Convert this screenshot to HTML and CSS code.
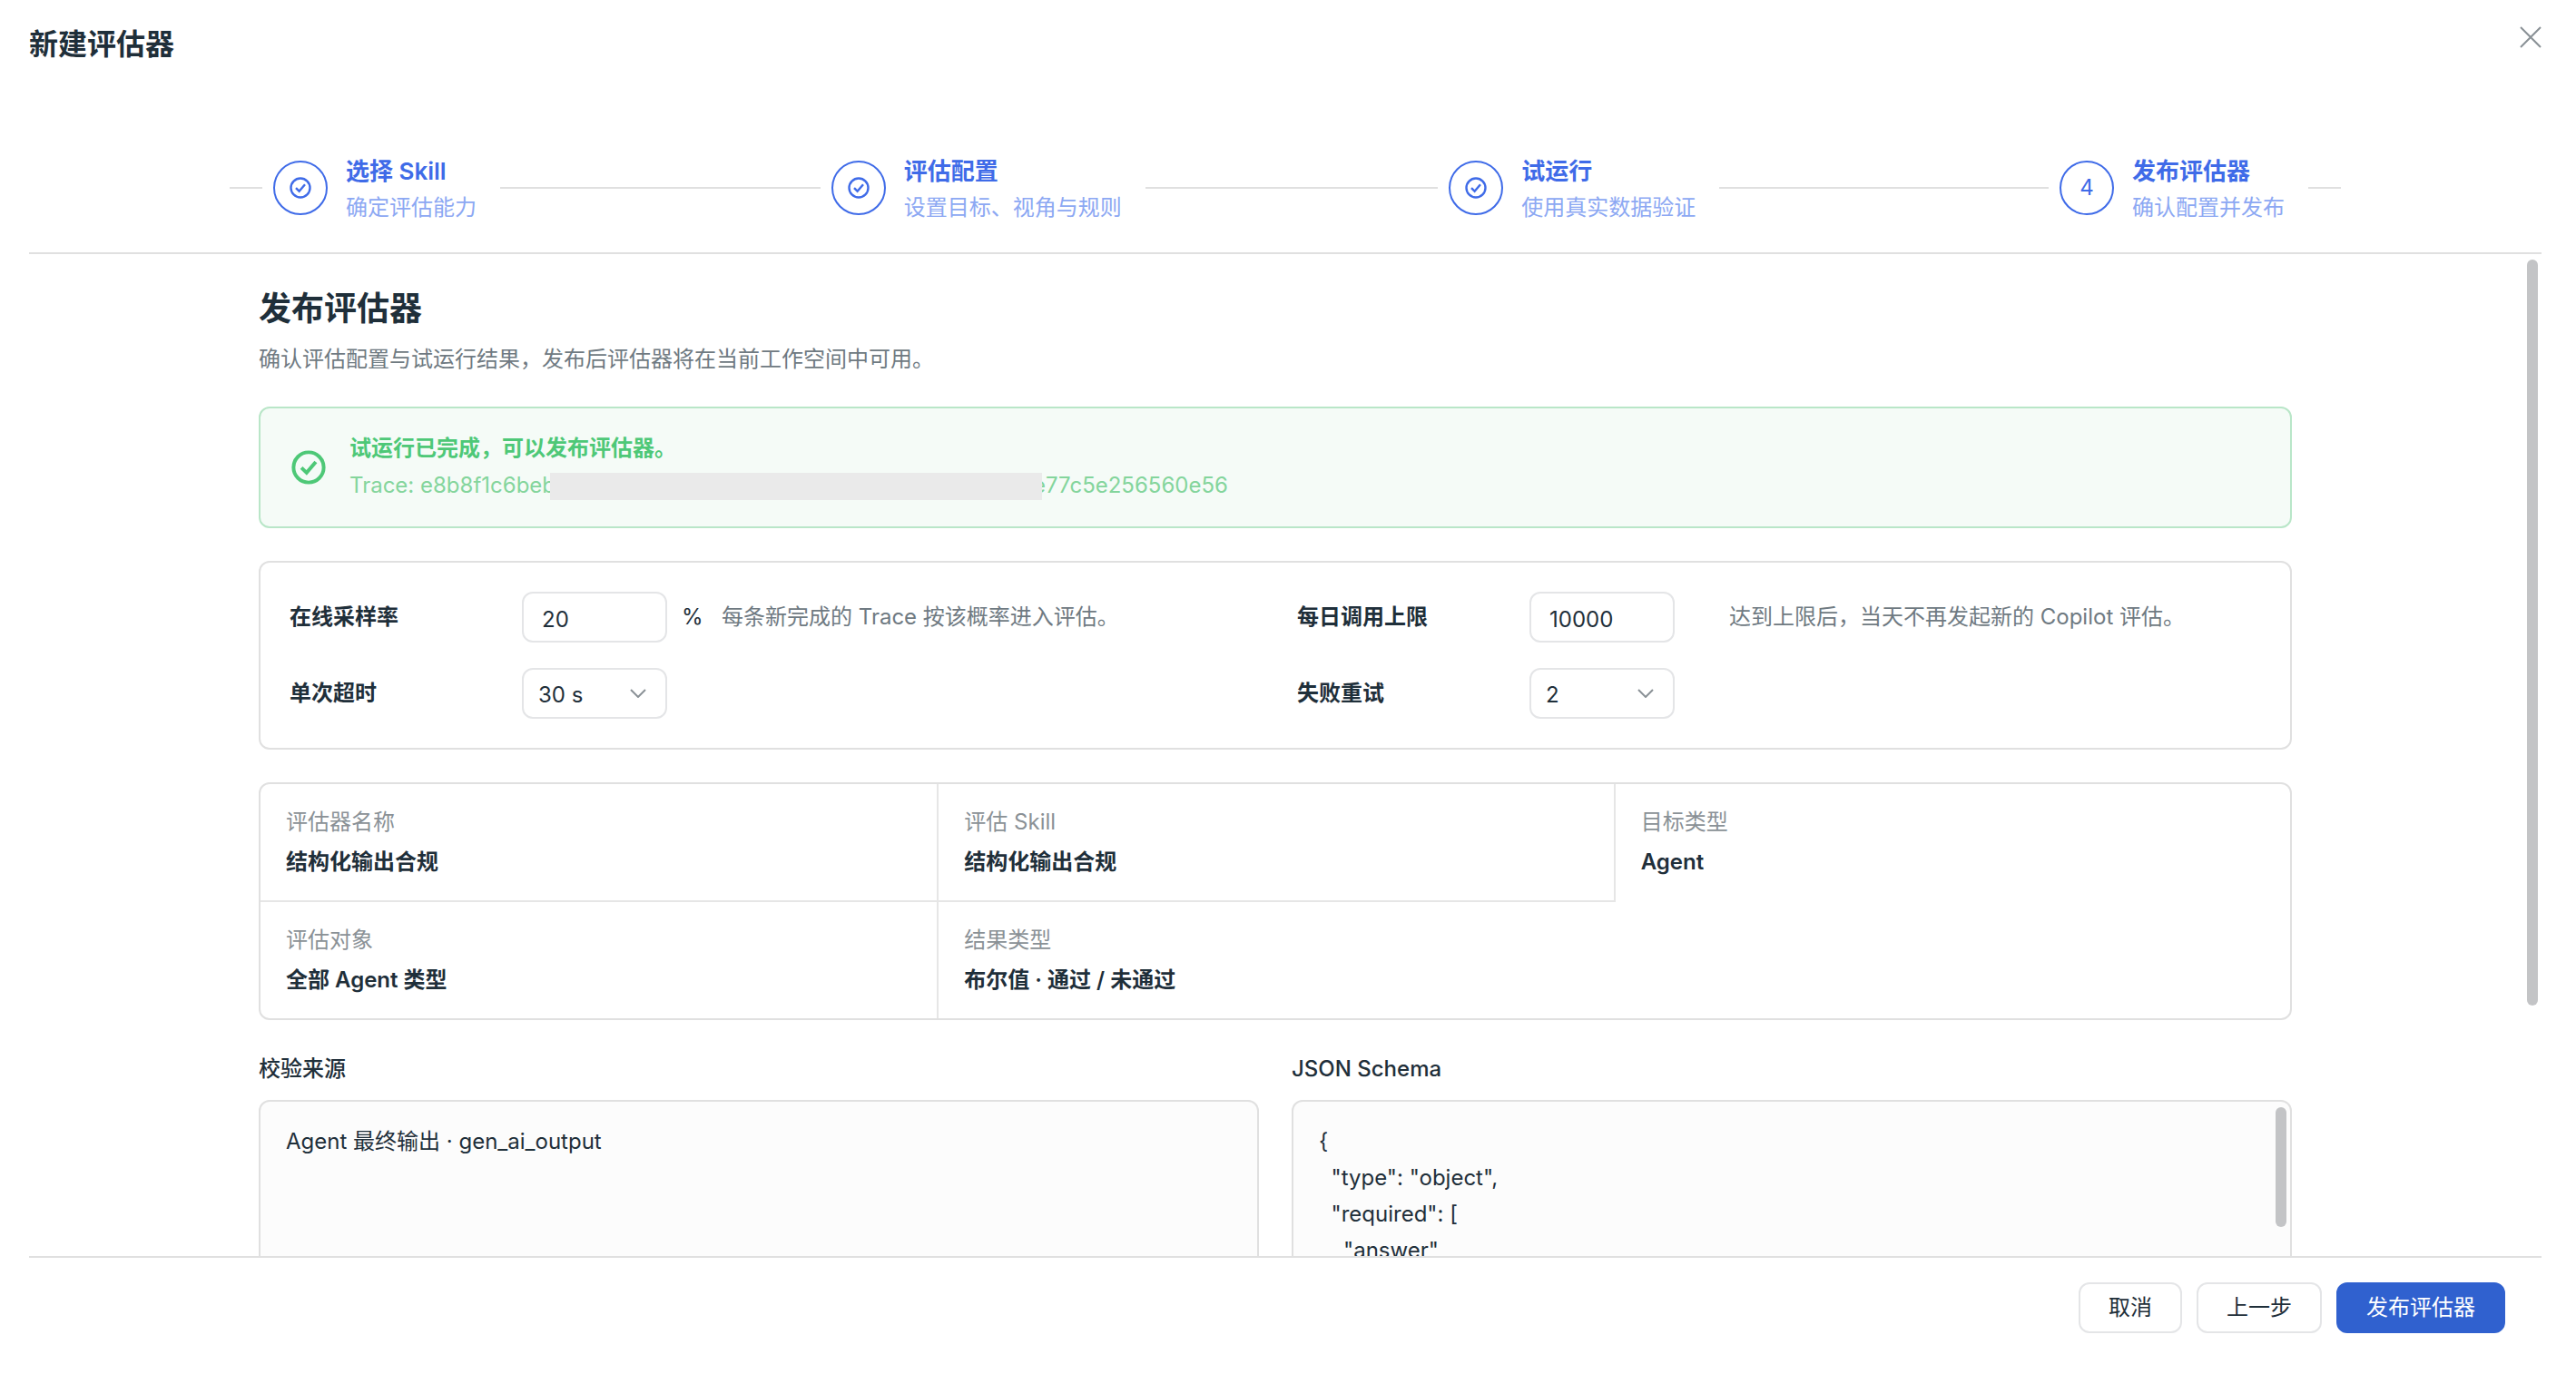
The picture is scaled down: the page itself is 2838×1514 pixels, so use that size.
FILE: index.html
```html
<!doctype html>
<html lang="zh-CN">

<head>
	<meta charset="utf-8">
	<title>新建评估器</title>
	<link rel="stylesheet" href="styles.css">
</head>

<body>
	<svg class="defs" aria-hidden="true">
		<symbol id="check-circle" viewBox="0 0 24 24">
			<circle cx="12" cy="12" r="10.5" />
			<path d="M7 12.2l3.6 3.5L17 8.2" />
		</symbol>
	</svg>

	<header class="header">
		<h1>新建评估器</h1>
		<button class="close" type="button" aria-label="关闭">
			<svg viewBox="0 0 24 24"><path d="M1 1l22 22M23 1L1 23" /></svg>
		</button>
	</header>

	<!-- 步骤条 -->
	<ol class="steps">
		<li class="step first">
			<span class="circle"><svg><use href="#check-circle" /></svg></span>
			<div class="step-text">
				<strong>选择 Skill</strong>
				<span>确定评估能力</span>
			</div>
		</li>
		<li class="step second">
			<span class="circle"><svg><use href="#check-circle" /></svg></span>
			<div class="step-text">
				<strong>评估配置</strong>
				<span>设置目标、视角与规则</span>
			</div>
		</li>
		<li class="step third">
			<span class="circle"><svg><use href="#check-circle" /></svg></span>
			<div class="step-text">
				<strong>试运行</strong>
				<span>使用真实数据验证</span>
			</div>
		</li>
		<li class="step last">
			<span class="circle">4</span>
			<div class="step-text">
				<strong>发布评估器</strong>
				<span>确认配置并发布</span>
			</div>
		</li>
	</ol>

	<main class="main">
		<div class="content">
			<h2>发布评估器</h2>
			<p class="lead">确认评估配置与试运行结果，发布后评估器将在当前工作空间中可用。</p>

			<div class="alert">
				<svg><use href="#check-circle" /></svg>
				<div>
					<strong>试运行已完成，可以发布评估器。</strong>
					<p>Trace: e8b8f1c6beb<span class="mask"></span>e77c5e256560e56</p>
				</div>
			</div>

			<form class="settings">
				<div class="field">
					<label for="rate">在线采样率</label>
					<input id="rate" type="text" value="20">
					<span class="unit">%</span>
					<span class="hint">每条新完成的 Trace 按该概率进入评估。</span>
				</div>
				<div class="field">
					<label for="limit">每日调用上限</label>
					<input id="limit" type="text" value="10000">
					<span class="unit"></span>
					<span class="hint">达到上限后，当天不再发起新的 Copilot 评估。</span>
				</div>
				<div class="field">
					<label for="timeout">单次超时</label>
					<div class="select">
						<select id="timeout">
							<option>30 s</option>
						</select>
						<svg viewBox="0 0 18 10"><path d="M1 1l8 8 8-8" /></svg>
					</div>
				</div>
				<div class="field">
					<label for="retry">失败重试</label>
					<div class="select">
						<select id="retry">
							<option>2</option>
						</select>
						<svg viewBox="0 0 18 10"><path d="M1 1l8 8 8-8" /></svg>
					</div>
				</div>
			</form>

			<dl class="summary">
				<div class="cell">
					<dt>评估器名称</dt>
					<dd>结构化输出合规</dd>
				</div>
				<div class="cell">
					<dt>评估 Skill</dt>
					<dd>结构化输出合规</dd>
				</div>
				<div class="cell">
					<dt>目标类型</dt>
					<dd>Agent</dd>
				</div>
				<div class="cell">
					<dt>评估对象</dt>
					<dd>全部 Agent 类型</dd>
				</div>
				<div class="cell">
					<dt>结果类型</dt>
					<dd>布尔值 · 通过 / 未通过</dd>
				</div>
			</dl>

			<div class="sources">
				<section>
					<h3>校验来源</h3>
					<pre class="box">Agent 最终输出 · gen_ai_output</pre>
				</section>
				<section>
					<h3>JSON Schema</h3>
					<div class="box-wrap">
						<pre class="box">{
  "type": "object",
  "required": [
    "answer"
  ]
}</pre>
						<span class="thumb box-thumb"></span>
					</div>
				</section>
			</div>
		</div>
		<span class="thumb main-thumb"></span>
	</main>

	<footer class="footer">
		<button class="btn" type="button">取消</button>
		<button class="btn" type="button">上一步</button>
		<button class="btn primary" type="button">发布评估器</button>
	</footer>
</body>

</html>
```
FILE: styles.css
```css
* {
	box-sizing: border-box;
	margin: 0;
	padding: 0;
}

body {
	display: flex;
	flex-direction: column;
	height: 100vh;
	padding: 0 38px 0 32px;
	overflow: hidden;
	background-color: #fff;
	color: #1f2f3a;
	font-family: Inter, "Noto Sans CJK SC", sans-serif;
	font-size: 24px;
	line-height: 36px;
}

button,
input,
select {
	color: inherit;
	font: inherit;
}

svg {
	fill: none;
	stroke: currentColor;
}

.defs {
	position: absolute;
	width: 0;
	height: 0;
}

/* header */
.header {
	display: flex;
	justify-content: space-between;
	align-items: flex-start;
	padding-top: 24px;
}

.header h1 {
	font-size: 32px;
	font-weight: 600;
	line-height: 50px;
}

.close {
	width: 24px;
	height: 34px;
	border: none;
	background: none;
	color: #8a9196;
	cursor: pointer;
}

.close svg {
	display: block;
	width: 24px;
	height: 34px;
	stroke-width: 2;
}

/* steps */
.steps {
	display: flex;
	padding: 91px 221px 29px;
	border-bottom: 2px solid #e0e0e0;
	list-style: none;
}

.step {
	display: flex;
	align-items: center;
	color: #3f6be8;
}

.step::after,
.first::before {
	content: "";
	flex: 1;
	height: 2px;
	margin: 0 12px 0 26px;
	background-color: #e0e0e0;
}

.first {
	flex: 35 1 auto;
}

.second {
	flex: 32 1 auto;
}

.third {
	flex: 36 1 auto;
}

.first::before {
	flex: none;
	width: 36px;
	margin-left: 0;
}

.last::after {
	flex: none;
	width: 36px;
	margin-right: 0;
}

.circle {
	display: flex;
	justify-content: center;
	align-items: center;
	width: 60px;
	height: 60px;
	margin-right: 20px;
	border: 2px solid #3f6be8;
	border-radius: 50%;
}

.circle svg {
	width: 24px;
	height: 24px;
	stroke-width: 2.4;
}

.step-text {
	padding-top: 4px;
}

.step-text strong,
.step-text span {
	display: block;
	line-height: 40px;
	white-space: nowrap;
}

.step-text strong {
	font-size: 26px;
	font-weight: 600;
}

.step-text span {
	color: #8ca8f3;
}

/* main */
.main {
	position: relative;
	flex: 1;
	min-height: 0;
	padding: 32px 22px 0 0;
	overflow: hidden;
}

.content {
	max-width: 2240px;
	margin: 0 auto;
}

.content h2 {
	font-size: 36px;
	font-weight: 600;
	line-height: 56px;
}

.lead {
	margin: 10px 0 34px;
	color: #6f7a82;
}

.alert {
	display: flex;
	align-items: center;
	gap: 26px;
	margin-bottom: 36px;
	padding: 24px 34px;
	border: 2px solid #b9e6c8;
	border-radius: 12px;
	background-color: #f5fbf7;
	color: #4ec877;
}

.alert svg {
	width: 38px;
	height: 38px;
	stroke-width: 2.5;
}

.alert strong {
	display: block;
	font-weight: 600;
	line-height: 40px;
}

.alert p {
	color: #84d59c;
	line-height: 42px;
}

.mask {
	display: inline-block;
	position: relative;
	width: 542px;
	height: 30px;
	margin: 0 -10px 0 -6px;
	background-color: #eaeaea;
	vertical-align: middle;
}

.settings {
	display: grid;
	grid-template-columns: 1fr 1fr;
	gap: 28px 48px;
	margin-bottom: 36px;
	padding: 32px;
	border: 2px solid #e0e0e0;
	border-radius: 12px;
}

.field {
	display: grid;
	grid-template-columns: 240px 160px 28px 1fr;
	align-items: center;
	gap: 16px;
}

.field label {
	font-weight: 600;
}

.field input,
.field select {
	width: 160px;
	height: 56px;
	padding: 4px 20px 0;
	border: 2px solid #e4e5e7;
	border-radius: 12px;
	background-color: #fff;
}

.field select {
	display: block;
	padding: 4px 16px 0;
	appearance: none;
}

.select {
	position: relative;
}

.select svg {
	position: absolute;
	top: 23px;
	right: 23px;
	width: 18px;
	height: 10px;
	color: #8a9196;
	stroke-width: 2;
	pointer-events: none;
}

.hint {
	color: #6f7a82;
}

.summary {
	display: grid;
	grid-template-columns: repeat(3, 1fr);
	margin-bottom: 36px;
	border: 2px solid #e0e0e0;
	border-radius: 12px;
}

.cell {
	padding: 24px 28px;
}

.cell:nth-child(-n+2) {
	border-bottom: 2px solid #e6e6e6;
}

.cell:nth-child(2),
.cell:nth-child(3),
.cell:nth-child(5) {
	border-left: 2px solid #e6e6e6;
}

.cell dt {
	margin-bottom: 8px;
	color: #8a9196;
}

.cell dd {
	font-weight: 600;
}

.sources {
	display: grid;
	grid-template-columns: 1fr 1fr;
	gap: 36px;
}

.sources h3 {
	margin-bottom: 16px;
	font-size: 24px;
	font-weight: 500;
}

.box-wrap {
	position: relative;
}

.box {
	height: 240px;
	padding: 24px 28px;
	overflow: hidden;
	border: 2px solid #e0e0e0;
	border-radius: 12px;
	background-color: #fcfcfc;
	font-family: inherit;
	line-height: 40px;
}

/* scrollbar */
.thumb {
	position: absolute;
	width: 12px;
	border-radius: 6px;
	background-color: #c3c4c6;
}

.box-thumb {
	top: 8px;
	right: 6px;
	height: 132px;
}

.main-thumb {
	top: 6px;
	right: 4px;
	height: 822px;
}

/* footer */
.footer {
	display: flex;
	justify-content: flex-end;
	gap: 16px;
	padding: 27px 40px 45px;
	border-top: 2px solid #e0e0e0;
}

.btn {
	height: 56px;
	padding: 0 31px;
	border: 2px solid #e4e5e7;
	border-radius: 12px;
	background-color: #fff;
	cursor: pointer;
}

.primary {
	border-color: #3061cf;
	background-color: #3061cf;
	color: #fff;
}
```
